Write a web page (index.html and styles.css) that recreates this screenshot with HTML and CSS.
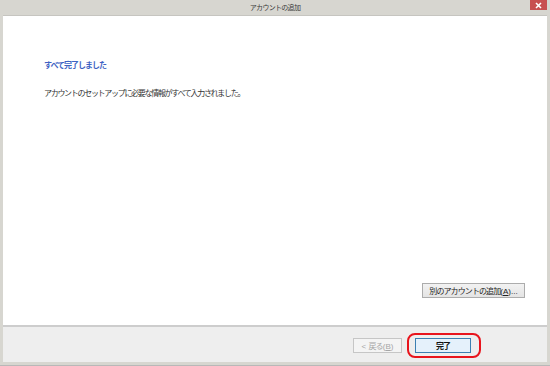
FILE: index.html
```html
<!DOCTYPE html>
<html lang="ja">
<head>
<meta charset="UTF-8" />
<meta name="viewport" content="width=device-width, initial-scale=1" />
<title>アカウントの追加</title>
<link rel="stylesheet" href="styles.css">
</head>
<body>
    <div class="window">
        <div class="titlebar">
            <span class="title">アカウントの追加</span>
            <span class="close-btn">
                <svg width="7" height="7" viewBox="0 0 7 7">
                    <path d="M1 1 L6 6 M6 1 L1 6" stroke="#fff" stroke-width="1.6" />
                </svg>
            </span>
        </div>
        <div class="content">
            <h3 class="heading">すべて完了しました</h3>
            <p class="message">アカウントのセットアップに必要な情報がすべて入力されました。</p>
            <button class="btn btn-add"><span class="jp">別のアカウントの追加</span>(<u>A</u>)...</button>
        </div>
        <div class="footer">
            <button class="btn btn-back" disabled>&lt; <span class="jp">戻る</span>(<u>B</u>)</button>
            <div class="highlight">
                <button class="btn btn-finish"><span class="jp">完了</span></button>
            </div>
        </div>
    </div>
</body>
</html>
```

FILE: styles.css
```css
:root {
    --frame-color: #d7d6d0;
    --panel-color: #eeeeee;
    --text-color: #333;
}

body, html {
    margin: 0;
    padding: 0;
    height: 100%;
    overflow: hidden;
    font-family: "Noto Sans CJK JP", "Liberation Sans", sans-serif;
    background: var(--frame-color);
}

.window {
    width: 550px;
    height: 366px;
    display: flex;
    flex-direction: column;
    box-sizing: border-box;
    padding: 0 3px 3px 3px;
    background: var(--frame-color);
    border-bottom: 1px solid #b8b8b8;
}

.titlebar {
    position: relative;
    height: 16px;
    display: flex;
    justify-content: center;
    align-items: center;
    border-bottom: 1px solid #c6c5c0;
    box-sizing: border-box;
}

.title {
    font-size: 7px;
    letter-spacing: -0.7px;
    color: #3a3a3a;
    margin-top: -2px;
}

/* close button over the title bar */
.close-btn {
    position: absolute;
    top: 0;
    right: 0;
    width: 17px;
    height: 10px;
    background: #c75050;
    display: flex;
    justify-content: center;
    align-items: center;
}

.content {
    flex: 1;
    background: #fff;
    display: flex;
    flex-direction: column;
    padding: 44px 22px 27px 41px;
    border-bottom: 2px solid #cdcdcd;
}

.heading {
    margin: 0;
    font-size: 8px;
    font-weight: bold;
    letter-spacing: -1px;
    line-height: 10px;
    color: #3e62c3;
}

.message {
    margin: 18px 0 0 0;
    font-size: 8px;
    letter-spacing: -1.3px;
    line-height: 10px;
    color: var(--text-color);
}

.btn {
    font-family: "Liberation Sans", "Noto Sans CJK JP", sans-serif;
    font-size: 8px;
    height: 15px;
    padding: 0;
    line-height: 13px;
    color: #222;
    background: linear-gradient(#f2f2f2, #e4e4e4);
    border: 1px solid #acacac;
    box-sizing: border-box;
}

.btn .jp {
    font-family: "Noto Sans CJK JP", sans-serif;
    letter-spacing: -0.9px;
}

.btn-add {
    margin-top: auto;
    align-self: flex-end;
    width: 103px;
}

.footer {
    height: 35px;
    background: var(--panel-color);
    display: flex;
    justify-content: flex-end;
    align-items: flex-start;
    padding: 11px 76px 0 0;
    box-sizing: border-box;
}

.btn-back {
    width: 49px;
    color: #a6a6a6;
    background: #f4f4f4;
    border-color: #c6c6c6;
}

.highlight {
    position: relative;
    margin-left: 13px;
}

/* red ring drawn round the finish button */
.highlight::after {
    content: "";
    position: absolute;
    top: -5px;
    left: -8px;
    right: -10px;
    bottom: -5px;
    border: 2px solid #e8141c;
    border-radius: 8px;
}

.btn-finish {
    width: 56px;
    background: #e5f1fb;
    border-color: #3c7fb1;
    color: #111;
    font-weight: bold;
    display: block;
}
```
